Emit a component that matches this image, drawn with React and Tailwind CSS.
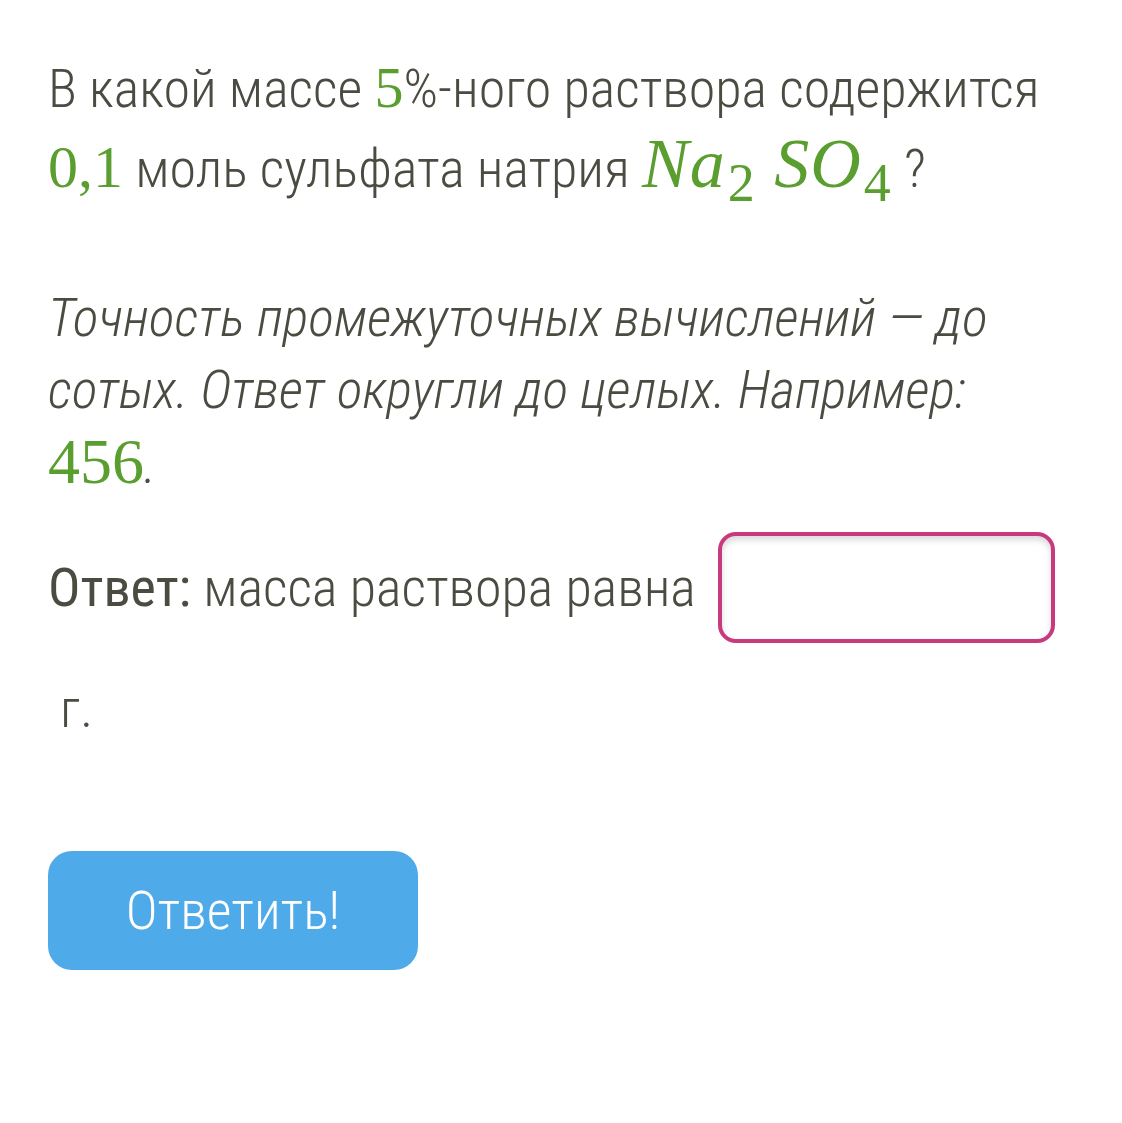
import React from 'react';

const sans = "font-['Roboto','Liberation_Sans',sans-serif] font-stretch-condensed";
const math = "font-['Liberation_Serif','Times_New_Roman',serif] font-stretch-normal text-[#5a9e2f]";

export default function App() {
  return (
    <div className={`min-h-screen bg-white text-[#4b4b42] ${sans} font-light px-12 pt-[50px]`}>
      <p className="text-[54px] leading-[75px]">
        В какой массе <span className={`${math} text-[58px]`}>5</span>%-ного раствора содержится{' '}
        <span className={`${math} text-[60px]`}>0,1</span> моль сульфата натрия{' '}
        <span className={`${math} italic text-[70px] tracking-[1px]`}>
          Na<sub className="text-[54px] not-italic ml-[2px]">2</sub>{' '}
          SO<sub className="text-[54px] not-italic ml-[2px]">4</sub>
        </span>{' '}
        ?
      </p>

      <p className="mt-[76px] text-[54px] leading-[72px] italic">
        Точность промежуточных вычислений — до сотых. Ответ округли до целых. Например:{' '}
        <span className={`${math} not-italic text-[64px]`}>456</span>.
      </p>

      <div className="mt-[31px] flex items-center gap-[22px]">
        <span className="text-[54px] leading-[75px]">
          <span className="font-normal">Ответ:</span> масса раствора равна
        </span>
        <input
          className="w-[337px] h-[111px] rounded-[18px] border-4 border-[#c83a7e] shadow-[inset_0_4px_6px_rgba(0,0,0,0.15)] outline-none"
        />
      </div>

      <p className="mt-[28px] pl-3 text-[54px] leading-[75px]">г.</p>

      <button className={`mt-[105px] w-[370px] h-[119px] rounded-[24px] bg-[#4eaae8] text-white text-[54px] font-light ${sans}`}>
        Ответить!
      </button>
    </div>
  );
}
